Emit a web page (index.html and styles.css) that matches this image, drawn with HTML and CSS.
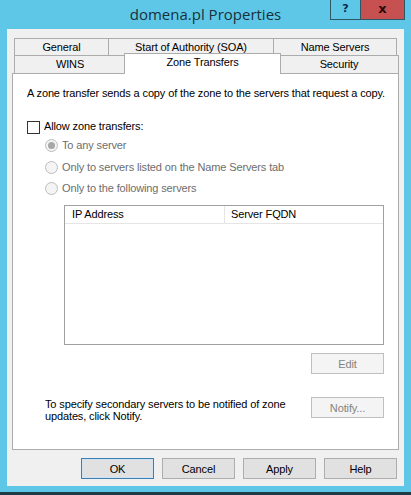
FILE: index.html
```html
<!DOCTYPE html>
<html>
<head>
<meta charset="utf-8">
<link rel="stylesheet" href="styles.css">
</head>
<body>
<div class="window">
  <div class="titlebar">
    <div class="title">domena.pl Properties</div>
    <div class="caption-buttons">
      <div class="cap-btn help-btn">?</div>
      <div class="cap-btn close-btn">x</div>
    </div>
  </div>
  <div class="client">
    <div class="tabs">
      <div class="tabrow row1">
        <div class="tab t-general">General</div>
        <div class="tab t-soa">Start of Authority (SOA)</div>
        <div class="tab t-ns">Name Servers</div>
      </div>
      <div class="tabrow row2">
        <div class="tab t-wins">WINS</div>
        <div class="tab t-zone selected">Zone Transfers</div>
        <div class="tab t-sec">Security</div>
      </div>
      <div class="pane">
        <div class="intro">A zone transfer sends a copy of the zone to the servers that request a copy.</div>
        <div class="check-row">
          <span class="checkbox"></span>
          <span class="label">Allow zone transfers:</span>
        </div>
        <div class="radio-row r1">
          <span class="radio checked"><span class="dot"></span></span>
          <span class="label disabled">To any server</span>
        </div>
        <div class="radio-row r2">
          <span class="radio"></span>
          <span class="label disabled">Only to servers listed on the Name Servers tab</span>
        </div>
        <div class="radio-row r3">
          <span class="radio"></span>
          <span class="label disabled">Only to the following servers</span>
        </div>
        <div class="listview">
          <div class="lv-header">
            <div class="lv-col c1">IP Address</div>
            <div class="lv-col c2">Server FQDN</div>
          </div>
        </div>
        <div class="edit-row">
          <div class="btn disabled-btn">Edit</div>
        </div>
        <div class="notify-row">
          <div class="notify-text">To specify secondary servers to be notified of zone<br>updates, click Notify.</div>
          <div class="btn disabled-btn">Notify...</div>
        </div>
      </div>
    </div>
    <div class="button-row">
      <div class="btn default-btn">OK</div>
      <div class="btn">Cancel</div>
      <div class="btn">Apply</div>
      <div class="btn">Help</div>
    </div>
  </div>
  <div class="bottom-strip"></div>
</div>
</body>
</html>
```

FILE: styles.css
```css
html, body {
  margin: 0;
  padding: 0;
}
body {
  width: 411px;
  height: 495px;
  overflow: hidden;
  background: #5ec7e7;
  font-family: "Liberation Sans", Arial, sans-serif;
  font-size: 11px;
  letter-spacing: -0.13px;
  color: #000;
}
.window {
  width: 411px;
  height: 495px;
  display: flex;
  flex-direction: column;
}
.titlebar {
  height: 29px;
  display: grid;
  grid-template-columns: 1fr auto 1fr;
  align-items: start;
}
.title {
  grid-column: 2;
  font-family: "Open Sans", "Noto Sans", sans-serif;
  font-size: 15px;
  letter-spacing: 0;
  color: #16323c;
  line-height: 26px;
  padding-top: 1px;
}
.caption-buttons {
  grid-column: 3;
  justify-self: end;
  display: flex;
  margin-right: 6px;
}
.cap-btn {
  height: 20px;
  box-sizing: border-box;
  display: flex;
  align-items: center;
  justify-content: center;
  font-family: "DejaVu Sans", sans-serif;
  font-weight: bold;
  letter-spacing: 0;
  border: 1px solid #2c5866;
  border-top: none;
}
.help-btn {
  width: 30px;
  font-size: 11px;
  color: #0b2a4a;
  border-right: none;
  padding-bottom: 2px;
}
.close-btn {
  width: 45px;
  background: #c75050;
  color: #2a0b0b;
  font-size: 13px;
  padding-bottom: 3px;
}
.client {
  margin: 0 7px;
  height: 457px;
  background: #f0f0f0;
  display: flex;
  flex-direction: column;
}
.tabs {
  margin: 9px 0 0 5px;
  width: 387px;
  display: flex;
  flex-direction: column;
}
.tabrow {
  display: flex;
  padding-left: 2px;
  align-items: flex-end;
}
.row1 {
  height: 17px;
}
.row2 {
  height: 18px;
}
.tab {
  box-sizing: border-box;
  border: 1px solid #acacac;
  border-bottom: none;
  background: #f0f0f0;
  text-align: center;
  height: 100%;
  line-height: 16px;
  margin-left: -1px;
  white-space: nowrap;
}
.tabrow .tab:first-child {
  margin-left: 0;
}
.t-general { width: 95px; }
.t-soa { width: 166px; }
.t-ns { width: 124px; }
.t-wins { width: 112px; }
.t-zone { width: 153px; }
.t-sec { width: 120px; }
.row2 .tab {
  line-height: 17px;
}
.tab.selected {
  background: #fff;
  width: 157px;
  height: 21px;
  margin: 0 -2px -1px -2px;
  line-height: 16px;
  position: relative;
  z-index: 2;
  border-bottom: none;
}
.row2 .t-sec {
  margin-left: 0;
}
.pane {
  box-sizing: border-box;
  height: 377px;
  background: #fff;
  border: 1px solid #acacac;
  padding: 13px 14px 0 14px;
  display: flex;
  flex-direction: column;
  position: relative;
  z-index: 1;
}
.intro {
  line-height: 13px;
  white-space: nowrap;
}
.check-row {
  margin-top: 21px;
  height: 13px;
  display: flex;
  align-items: center;
}
.checkbox {
  width: 13px;
  height: 13px;
  box-sizing: border-box;
  border: 1px solid #333;
  background: #fff;
  flex: none;
}
.label {
  margin-left: 4px;
  line-height: 13px;
  white-space: nowrap;
}
.check-row .label {
  margin-top: -3px;
}
.label.disabled {
  color: #6d6d6d;
}
.radio-row {
  height: 13px;
  display: flex;
  align-items: center;
  padding-left: 18px;
}
.r1 { margin-top: 5px; }
.r2 { margin-top: 9px; }
.r3 { margin-top: 8px; }
.radio {
  width: 13px;
  height: 13px;
  box-sizing: border-box;
  border: 1px solid #bcbcbc;
  border-radius: 50%;
  background: #f4f4f4;
  flex: none;
  display: flex;
  align-items: center;
  justify-content: center;
}
.radio .dot {
  width: 7px;
  height: 7px;
  border-radius: 50%;
  background: #a7a7a7;
}
.listview {
  margin-top: 10px;
  margin-left: 37px;
  width: 320px;
  height: 140px;
  box-sizing: border-box;
  border: 1px solid #a0a0a0;
  background: #fff;
}
.lv-header {
  display: flex;
  height: 17px;
  border-bottom: 1px solid #e5e5e5;
}
.lv-col {
  line-height: 17px;
  padding-left: 7px;
  box-sizing: border-box;
  white-space: nowrap;
}
.c1 {
  width: 160px;
  border-right: 1px solid #e5e5e5;
}
.c2 {
  flex: 1;
  padding-left: 6px;
}
.edit-row {
  margin-top: 8px;
  display: flex;
  justify-content: flex-end;
}
.notify-row {
  margin-top: 23px;
  display: flex;
  justify-content: space-between;
  align-items: flex-start;
  padding-left: 18px;
}
.notify-text {
  line-height: 12px;
  white-space: nowrap;
  margin-top: 1px;
}
.btn {
  width: 73px;
  height: 21px;
  box-sizing: border-box;
  border: 1px solid #adadad;
  background: #e1e1e1;
  display: flex;
  align-items: center;
  justify-content: center;
  flex: none;
}
.disabled-btn {
  background: #f4f4f4;
  border-color: #bfbfbf;
  color: #838383;
}
.default-btn {
  border-color: #3c7fb1;
  box-shadow: inset 0 0 0 1px #cfe3f5;
}
.button-row {
  margin-top: 8px;
  margin-right: 7px;
  display: flex;
  justify-content: flex-end;
  gap: 8px;
}
.bottom-strip {
  margin-top: auto;
  height: 3px;
  background: #1f3b45;
}
```
